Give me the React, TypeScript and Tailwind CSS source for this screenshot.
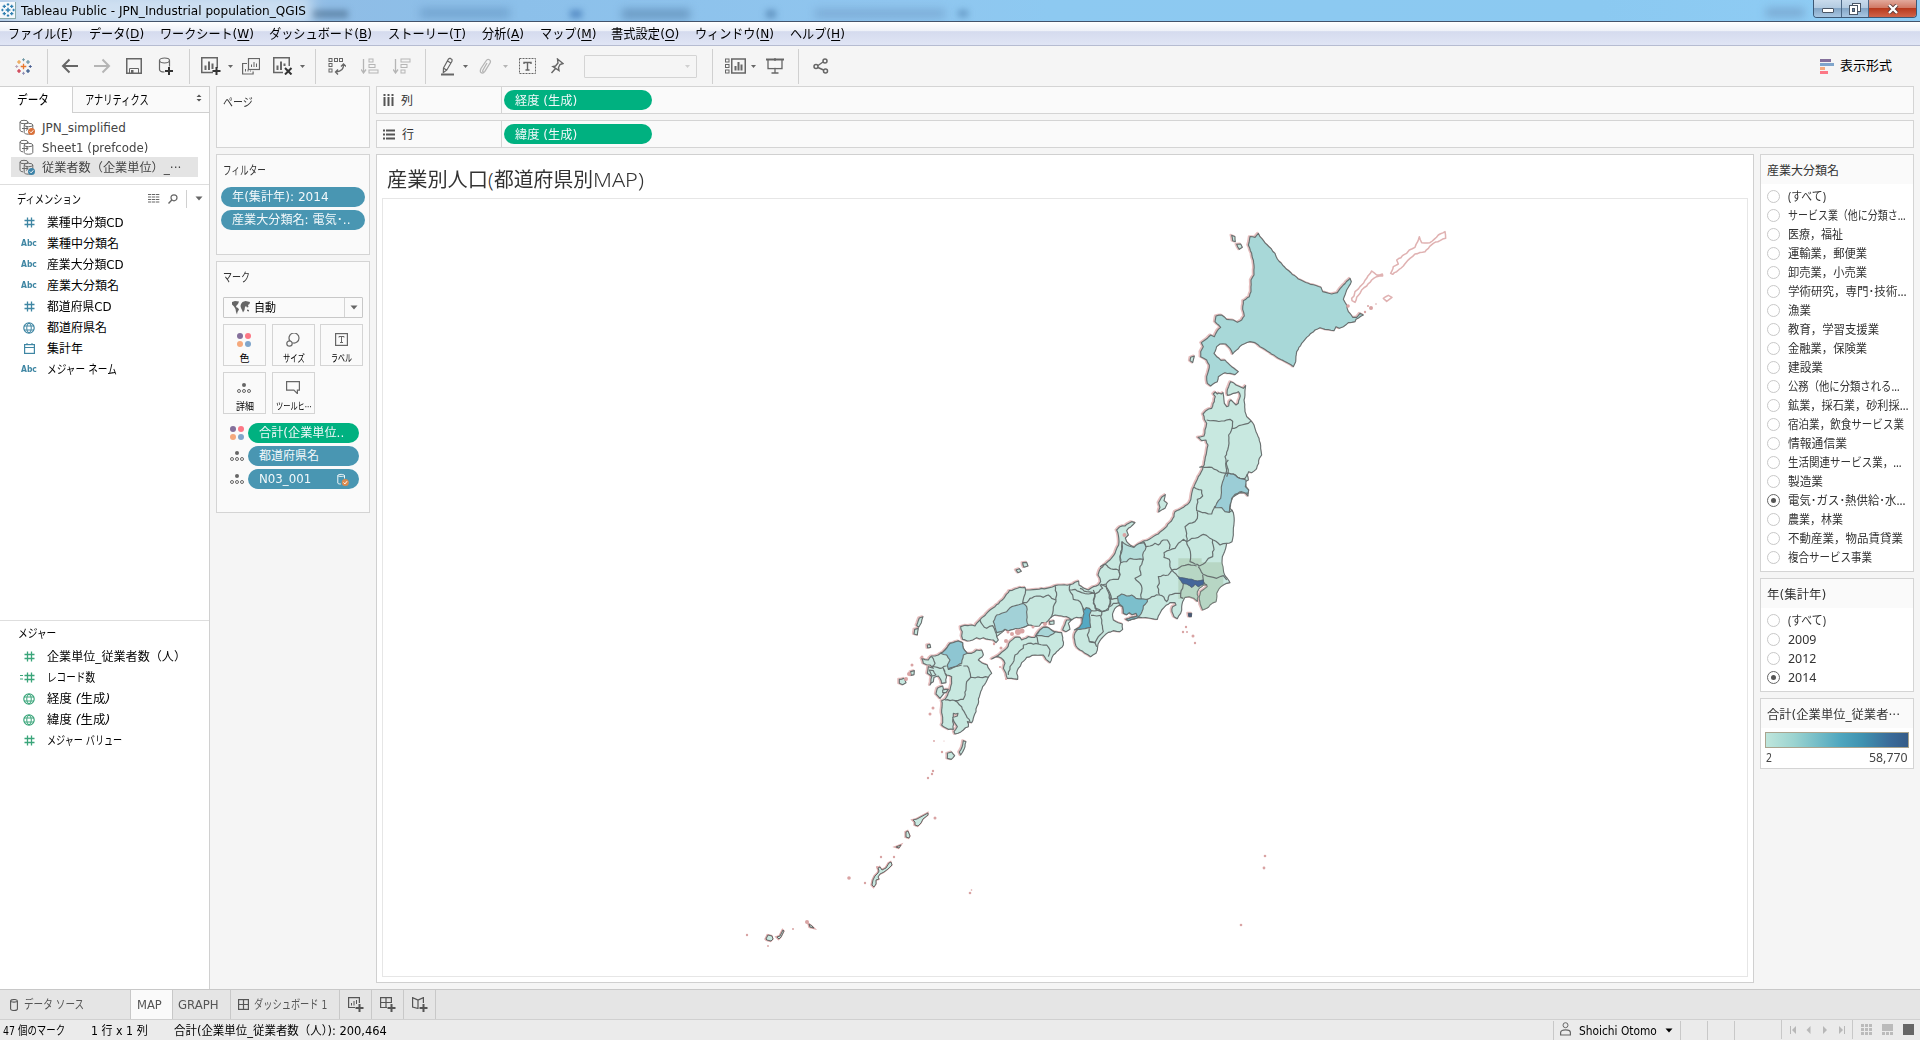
import React, { useLayoutEffect, useRef, useState } from "react";

/* ---------- text helper: condenses a run of text to a given advance width ---------- */
function T({ w, className = "", children }: { w: number; className?: string; children: React.ReactNode }) {
  const ref = useRef<HTMLSpanElement>(null);
  const [scale, setScale] = useState(1);
  useLayoutEffect(() => {
    if (ref.current) setScale(w / ref.current.offsetWidth);
  }, [w]);
  return (
    <span className={`inline-block shrink-0 whitespace-nowrap ${className}`} style={{ width: w }}>
      <span ref={ref} className="inline-block origin-left" style={{ transform: `scaleX(${scale})` }}>
        {children}
      </span>
    </span>
  );
}

const Caret = ({ className = "" }: { className?: string }) => (
  <svg width="8" height="5" viewBox="0 0 8 5" className={`shrink-0 ${className}`}>
    <path d="M0.5 0.5h7L4 4.5z" fill="currentColor" />
  </svg>
);
const SmallCaret = ({ className = "" }: { className?: string }) => (
  <svg width="5" height="3" viewBox="0 0 5 3" className={`shrink-0 ${className}`}>
    <path d="M0 0h5L2.500 3z" fill="currentColor" />
  </svg>
);

function Svg({ w = 20, h = 20, className = "", children }: any) {
  return (
    <svg width={w} height={h} viewBox={`0 0 ${w} ${h}`} fill="none" stroke="currentColor" className={`block shrink-0 ${className}`}>
      {children}
    </svg>
  );
}

/* ---------- Tableau logo ---------- */
function Logo({ mono = false, size = 17 }: { mono?: boolean; size?: number }) {
  const c = (x: string) => (mono ? "#2f7fb0" : x);
  const k = mono ? 1.4 : 1;
  const cross = (x: number, y: number, r: number, col: string, sw = 1) => (
    <path d={`M${x - r} ${y}h${2 * r}M${x} ${y - r}v${2 * r}`} stroke={c(col)} strokeWidth={sw * k} />
  );
  return (
    <svg width={size} height={size} viewBox="0 0 17 17" fill="none" className="block shrink-0">
      {cross(8.5, 8.5, 2.8, "#e8762c", 1.3)}
      {cross(4, 4, 2, "#eb9a3c", 1.1)}
      {cross(13, 4, 2, "#5b879b", 1.1)}
      {cross(4, 13, 2, "#c72035", 1.1)}
      {cross(13, 13, 2, "#1f457e", 1.1)}
      {cross(8.5, 1.7, 1.5, "#7099a6")}
      {cross(8.5, 15.3, 1.5, "#8c8fb5")}
      {cross(1.7, 8.5, 1.5, "#b8a0b5")}
      {cross(15.3, 8.5, 1.5, "#4a5f93")}
    </svg>
  );
}

/* ---------- title + menu ---------- */
function TitleBar() {
  return (
    <div className="relative flex h-[22px] items-center justify-between overflow-hidden border-b border-[#43536b] bg-[linear-gradient(90deg,#b4cde8_0px,#a9c9e8_280px,#8fbde6_330px,#8cc0ea_520px,#90c6ef_900px,#8dc9f1_1050px,#8bc9f1_1600px,#90cdf5_1920px)]">
      <div className="absolute top-[10px] left-[312px] h-[8px] w-[36px] bg-[#4f7294]/70 blur-[3px]" />
      <div className="absolute top-[8px] left-[420px] h-[10px] w-[90px] bg-[#5f8fbd]/55 blur-[4px]" />
      <div className="absolute top-[10px] left-[570px] h-[8px] w-[12px] bg-[#3f76b5]/70 blur-[3px]" />
      <div className="absolute top-[9px] left-[622px] h-[10px] w-[68px] bg-[#547fa8]/60 blur-[4px]" />
      <div className="absolute top-[10px] left-[766px] h-[8px] w-[10px] bg-[#4d7fae]/70 blur-[3px]" />
      <div className="absolute top-[9px] left-[815px] h-[9px] w-[130px] bg-[#6a93c0]/50 blur-[4px]" />
      <div className="absolute top-[10px] left-[958px] h-[7px] w-[10px] bg-[#4d7fae]/60 blur-[3px]" />
      <div className="absolute top-[8px] left-[1766px] h-[9px] w-[38px] bg-[#6d93bd]/60 blur-[4px]" />
      <div className="absolute -top-1 left-3 h-[28px] w-[300px] bg-white/40 blur-[6px]" />
      <div className="relative flex items-center">
        <div className="flex h-[17px] w-[16px] items-center justify-center border-r border-b border-[#8aa] bg-[#f4f8fb]">
          <Logo mono size={14} />
        </div>
        <T w={285} className="ml-[5px] text-[12px] leading-[20px] text-black">
          Tableau Public - JPN_Industrial population_QGIS
        </T>
      </div>
      <div className="relative mr-[3px] flex h-[18px] self-start overflow-hidden rounded-b-[4px] border border-t-0 border-[#3c5875]">
        <div className="flex w-[28px] items-center justify-center border-r border-[#4c6886] bg-[linear-gradient(#c9dbec_0%,#b3cbe1_45%,#84a6c6_50%,#a8c6e2_100%)]">
          <div className="mt-[3px] h-[5px] w-[12px] rounded-[1px] border border-[#4a5666] bg-white" />
        </div>
        <div className="flex w-[27px] items-center justify-center border-r border-[#4c6886] bg-[linear-gradient(#c9dbec_0%,#b3cbe1_45%,#84a6c6_50%,#a8c6e2_100%)]">
          <Svg w={12} h={12} className="text-[#4a5666]">
            <rect x="3.500" y="0.500" width="8" height="8" fill="#fff" />
            <rect x="0.500" y="2.500" width="8" height="9" fill="#fff" />
            <rect x="3.500" y="5.500" width="2" height="3" fill="#6b89a8" />
          </Svg>
        </div>
        <div className="flex w-[47px] items-center justify-center bg-[linear-gradient(#e2a99c_0%,#d17a66_45%,#b83a1e_50%,#d0644a_100%)]">
          <Svg w={12} h={10}>
            <path d="M2 1l8 8M10 1l-8 8" stroke="#5a3a3a" strokeWidth="4" />
            <path d="M2 1l8 8M10 1l-8 8" stroke="#fff" strokeWidth="2.400" />
          </Svg>
        </div>
      </div>
    </div>
  );
}

const menus: [string, string, number, number][] = [
  ["ファイル", "F", 65, 16],
  ["データ", "D", 55, 16],
  ["ワークシート", "W", 94, 15],
  ["ダッシュボード", "B", 103, 16],
  ["ストーリー", "T", 78, 15.5],
  ["分析", "A", 42, 16.5],
  ["マップ", "M", 56, 15],
  ["書式設定", "O", 68, 16],
  ["ウィンドウ", "N", 79, 16],
  ["ヘルプ", "H", 55, 0],
];
function MenuBar() {
  return (
    <div className="flex h-[24px] items-center border-b border-[#b6bcd1] bg-[linear-gradient(#ffffff_0%,#eef1f8_38%,#d5dbee_42%,#e0e5f5_100%)] pl-2 text-[13px] leading-[20px] text-black">
      {menus.map(([label, key, w, gap]) => (
        <span key={key} className="flex" style={{ marginRight: gap }}>
          <T w={w}>
            {label}(<span className="underline underline-offset-2">{key}</span>)
          </T>
        </span>
      ))}
    </div>
  );
}

/* ---------- toolbar ---------- */
const Sep = ({ className = "" }: { className?: string }) => <div className={`h-[35px] w-px shrink-0 bg-[#d0d0d0] ${className}`} />;
const Cell = ({ className = "", children }: any) => (
  <div className={`flex shrink-0 items-center justify-center ${className}`}>{children}</div>
);
const Plus = ({ x, y }: { x: number; y: number }) => <path d={`M${x - 4} ${y}h8M${x} ${y - 4}v8`} stroke="#333" strokeWidth="2" />;

function Toolbar() {
  return (
    <div className="flex h-[40px] items-center bg-[#f5f5f5] text-[#666]">
      <Cell className="w-[47px]"><Logo /></Cell>
      <Sep />
      <Cell className="ml-[6px] w-8">
        <Svg w={18} h={16}><path d="M17 8H2M8.500 1.500L2 8l6.500 6.500" strokeWidth="2" /></Svg>
      </Cell>
      <Cell className="w-8 text-[#b5b5b5]">
        <Svg w={18} h={16}><path d="M1 8h15M9.500 1.500L16 8l-6.500 6.500" strokeWidth="2" /></Svg>
      </Cell>
      <Cell className="w-8">
        <Svg w={16} h={16}><rect x=".750" y=".750" width="14.500" height="14.500" strokeWidth="1.500" /><path d="M3.500 15v-4.500h9V15" /><rect x="5" y="12" width="2.500" height="3" fill="currentColor" stroke="none" /></Svg>
      </Cell>
      <Cell className="w-8">
        <Svg w={16} h={19}>
          <ellipse cx="6.500" cy="3.500" rx="5" ry="2.500" strokeWidth="1.200" /><path d="M1.500 3.500v9c0 1.500 2 2.500 5 2.500M11.500 3.500v6" strokeWidth="1.200" />
          <Plus x={11} y={14} />
        </Svg>
      </Cell>
      <Sep className="ml-[7px]" />
      <Cell className="ml-[5px] w-8">
        <Svg w={20} h={18}><path d="M12 15.500H.750V.750h15.500V11" strokeWidth="1.500" /><path d="M4.500 13V8.500M8 13V4.500M11.500 12V6.500" strokeWidth="2" /><Plus x={15.5} y={14} /></Svg>
      </Cell>
      <Cell className="w-[7px]"><SmallCaret /></Cell>
      <Cell className="ml-px w-8">
        <Svg w={18} h={17}><rect x="6.500" y=".500" width="11" height="11" strokeWidth="1.200" /><path d="M5 5.500H.600v10.500h10.500V13.500" strokeWidth="1.200" /><path d="M9.500 9V6.500M12 9V4M14.500 9V5.500M3.500 13.500V11M6 13.500v-2M8.500 13.500v-1" /></Svg>
      </Cell>
      <Cell className="w-8">
        <Svg w={20} h={18}><path d="M10 15.500H.750V.750h15.500V9" strokeWidth="1.500" /><path d="M4.500 13V8.500M8 13V4.500M11.500 9V6.500" strokeWidth="2" /><path d="M12 11l6.500 6.500M18.500 11L12 17.500" stroke="#333" strokeWidth="2" /></Svg>
      </Cell>
      <Cell className="w-[7px]"><SmallCaret /></Cell>
      <Sep className="ml-[9px]" />
      <Cell className="ml-[5px] w-8">
        <Svg w={18} h={18}><rect x="1" y="1.500" width="3" height="3" /><rect x="6.500" y="1.500" width="3" height="3" /><rect x="11.500" y="1.500" width="3" height="3" /><rect x="1" y="6.500" width="3" height="3" /><rect x="1" y="12" width="3" height="3" /><path d="M15.500 7c.500 4.500-2 7.500-7.500 8M13 9.500L15.500 7 18 9.500M10 12.500L7.500 15l2.500 2.500" strokeWidth="1.300" /></Svg>
      </Cell>
      <Cell className="ml-px w-8 text-[#b5b5b5]">
        <Svg w={18} h={16}><path d="M2.500 1v13M0 11.500L2.500 15 5 11.500" strokeWidth="1.300" /><rect x="8" y="1" width="4" height="3" /><rect x="8" y="6.500" width="6" height="3" /><rect x="8" y="12" width="9" height="3" /></Svg>
      </Cell>
      <Cell className="w-8 text-[#b5b5b5]">
        <Svg w={18} h={16}><path d="M2.500 1v13M0 11.500L2.500 15 5 11.500" strokeWidth="1.300" /><rect x="8" y="1" width="9" height="3" /><rect x="8" y="6.500" width="6" height="3" /><rect x="8" y="12" width="4" height="3" /></Svg>
      </Cell>
      <Sep className="ml-[7px]" />
      <Cell className="ml-[9px] w-[25px]">
        <Svg w={13} h={19}><path d="M2.500 11L7.500 2l1.500-.800L11 2.500v1.700L5.700 13.200 2.300 15.500zM2.500 11l3.200 2.200M6.500 4l3 1.800" strokeWidth="1.200" /><path d="M0 17.500h13" strokeWidth="2" /></Svg>
      </Cell>
      <Cell className="ml-px w-2"><SmallCaret /></Cell>
      <Cell className="ml-[3px] w-[26px] text-[#b5b5b5]">
        <Svg w={14} h={16}><path d="M9 5L5 12c-1 2 1 3 2 1.200L12 5c1.500-3-2-5-4-2L3 10.500c-2 4 1 5.500 3 4" strokeWidth="1.300" /></Svg>
      </Cell>
      <Cell className="ml-[3px] w-2 text-[#b5b5b5]"><SmallCaret /></Cell>
      <Cell className="ml-[5px] w-[26px]">
        <Svg w={17} h={16}><rect x=".500" y=".500" width="16" height="15" strokeDasharray="2 1" /><path d="M5 6V4.500h7V6M8.500 4.500v7M6.500 12h4" strokeWidth="1.400" /></Svg>
      </Cell>
      <Cell className="ml-[4px] w-[26px]">
        <Svg w={14} h={16}><path d="M7.500 1l5.500 4.500-3 1-1.500 3 .500 3L3 8.500l2.500-.500L8 5zM5.500 10.500L1.500 15" strokeWidth="1.400" /></Svg>
      </Cell>
      <div className="ml-[14px] flex h-[23px] w-[113px] shrink-0 items-center justify-end rounded-[1px] border border-[#d4d4d4] pr-[6px] text-[#d0d0d0]"><SmallCaret /></div>
      <Sep className="ml-[15px]" />
      <Cell className="ml-[8px] w-7">
        <Svg w={21} h={16}><rect x=".500" y="1" width="3.500" height="3" /><rect x=".500" y="6.500" width="3.500" height="3" /><rect x=".500" y="12" width="3.500" height="3" /><rect x="6.750" y="1" width="13.500" height="14" strokeWidth="1.500" /><path d="M10.500 12.500V8M13.500 12.500V4M16.500 12.500V6.500" strokeWidth="2" /></Svg>
      </Cell>
      <Cell className="w-2"><SmallCaret /></Cell>
      <Cell className="ml-[5px] w-[25px]">
        <Svg w={18} h={16}><path d="M0 1.500h18" strokeWidth="2" /><path d="M2 2v8.500h14V2M9 0v15M5.500 15h7" strokeWidth="1.300" /><rect x="3" y="3" width="12" height="6.800" fill="#f5f5f5" stroke="none" /></Svg>
      </Cell>
      <Sep className="ml-[11px]" />
      <Cell className="ml-[9px] w-[26px]">
        <Svg w={16} h={16}><circle cx="3" cy="8.500" r="2" strokeWidth="1.500" /><circle cx="12" cy="3" r="2" strokeWidth="1.500" /><circle cx="12.500" cy="13" r="2" strokeWidth="1.500" /><path d="M5 7.500L10 4M5 9.500l5.500 2.500" strokeWidth="1.400" /></Svg>
      </Cell>
      <div className="mr-[28px] ml-auto flex items-center gap-[6px] text-[13px] text-black">
        <div className="flex w-[14px] flex-col gap-px">
          <div className="h-[3px] w-[11px] bg-[#84709b]" />
          <div className="h-[3px] w-[14px] bg-[#7fa5cb]" />
          <div className="h-[3px] w-[5px] bg-[#f5a97d]" />
          <div className="h-[3px] w-[8px] bg-[#fc7785]" />
        </div>
        <T w={52}>表示形式</T>
      </div>
    </div>
  );
}

/* ---------- field glyphs ---------- */
const Hash = () => (
  <Svg w={11} h={11}><path d="M.500 3.500h10M.500 7.500h10M3.500 .500v10M7.500 .500v10" strokeWidth="1.300" /></Svg>
);
const Globe = () => (
  <Svg w={12} h={12}><circle cx="6" cy="6" r="5.200" strokeWidth="1.200" /><path d="M1 4h10M1 8h10M6 1C3 3 3 9 6 11M6 1c3 2 3 8 0 10" /></Svg>
);
const Calendar = () => (
  <Svg w={11} h={11}><rect x=".600" y="1.600" width="9.800" height="8.800" strokeWidth="1.200" /><path d="M1 4.500h9M3 0v2M8 0v2" /></Svg>
);
const Abc = () => <T w={16} className="text-[9.5px] font-bold">Abc</T>;
const kinds: Record<string, React.ReactNode> = {
  hash: <Hash />,
  abc: <Abc />,
  globe: <Globe />,
  cal: <Calendar />,
  eqhash: (
    <span className="-ml-[4px] flex items-center"><Svg w={3} h={5}><path d="M0 .500h3M0 4h3" /></Svg><span className="ml-px"><Hash /></span></span>
  ),
};
function Field({ kind, label, w }: { kind: string; label: React.ReactNode; w: number }) {
  return (
    <div className="flex h-[21px] items-center">
      <div className="flex w-[58px] shrink-0 items-center justify-center text-inherit">{kinds[kind]}</div>
      <T w={w} className="-ml-[11px] text-[12px] leading-[20px] text-black">{label}</T>
    </div>
  );
}

function SourceIcon({ badge }: { badge?: string }) {
  return (
    <Svg w={17} h={17} className="text-[#6a6a6a]">
      <ellipse cx="5" cy="3" rx="4" ry="1.700" /><path d="M1 3v8c0 1 1.500 1.800 3 1.800M9 3v1" />
      <ellipse cx="9.500" cy="6" rx="4.300" ry="1.700" /><path d="M5.200 6v7.500c0 1 2 1.700 4.300 1.700s4.300-.700 4.300-1.700V6M3 9.500h6M7 7.500l2.200 2L7 11.500" />
      {badge && <><circle cx="12.500" cy="12.500" r="3.500" fill={badge} stroke="none" /><path d="M10.800 12.500l1.300 1.300 2.200-2.500" stroke="#fff" /></>}
    </Svg>
  );
}

const sources: [string, number, string | undefined, boolean][] = [
  ["JPN_simplified", 84, "#d9723b", false],
  ["Sheet1 (prefcode)", 106, undefined, false],
  ["従業者数（企業単位）_···", 139, "#3d83a8", true],
];
const dims: [string, string, number][] = [
  ["hash", "業種中分類CD", 77],
  ["abc", "業種中分類名", 72],
  ["abc", "産業大分類CD", 77],
  ["abc", "産業大分類名", 72],
  ["hash", "都道府県CD", 65],
  ["globe", "都道府県名", 60],
  ["cal", "集計年", 36],
  ["abc", "メジャー ネーム", 70],
];

function DataPane() {
  return (
    <div className="flex w-[210px] shrink-0 flex-col border-t border-r border-[#d0d0d0] bg-white">
      <div className="flex h-[26px] text-[13px] leading-[26px] text-black">
        <div className="w-[72px] pl-[17px]"><T w={32}>データ</T></div>
        <div className="flex flex-1 items-center border-b border-l border-[#d0d0d0] bg-[#fafafa] pl-[12px]">
          <T w={64}>アナリティクス</T>
          <Svg w={6} h={8} className="mr-[7px] mb-[3px] ml-auto"><path d="M.500 3L3 .500 5.500 3zM.500 5L3 7.500 5.500 5z" fill="#555" stroke="none" /></Svg>
        </div>
      </div>
      <div className="flex h-[72px] flex-col border-b border-[#dedede] pt-[4px]">
        {sources.map(([label, w, badge, sel]) => (
          <div key={label} className={`ml-[11px] flex h-5 w-[187px] items-center pl-2 ${sel ? "bg-[#e4e4e4]" : ""}`}>
            <SourceIcon badge={badge} />
            <T w={w} className="mt-[2px] ml-[6px] text-[12px] leading-[20px] text-[#444]">{label}</T>
          </div>
        ))}
      </div>
      <div className="flex h-[27px] items-center pt-[2px] pl-[17px] text-[12px] text-black">
        <T w={64}>ディメンション</T>
        <div className="mb-[2px] ml-auto flex items-center text-[#666]">
          <Svg w={12} h={9}><path d="M0 .500h12M0 3h12M0 5.500h12M0 8h12" strokeDasharray="3.300 0.700" strokeWidth="1.200" /></Svg>
          <Svg w={10} h={10} className="ml-2"><circle cx="6" cy="3.800" r="3" strokeWidth="1.200" /><path d="M3.800 6L.500 9.500" strokeWidth="1.400" /></Svg>
          <div className="ml-[8px] h-[18px] w-px bg-[#d0d0d0]" />
          <Caret className="mr-[6px] ml-[8px]" />
        </div>
      </div>
      <div className="flex flex-col text-[#3f86a3]">
        {dims.map(([k, l, w]) => <Field key={l} kind={k} label={l} w={w} />)}
      </div>
      <div className="mt-[240px] border-t border-[#dedede] pt-[3px] pl-[18px] text-[12px] leading-[20px] text-black">
        <T w={38}>メジャー</T>
      </div>
      <div className="mt-[2px] flex flex-col text-[#3aa57a]">
        <Field kind="hash" label="企業単位_従業者数（人）" w={139} />
        <Field kind="eqhash" label="レコード数" w={48} />
        <Field kind="globe" label={<>経度 <i>(</i>生成<i>)</i></>} w={63} />
        <Field kind="globe" label={<>緯度 <i>(</i>生成<i>)</i></>} w={63} />
        <Field kind="hash" label="メジャー バリュー" w={75} />
      </div>
    </div>
  );
}

/* ---------- cards ---------- */
const FourDots = () => (
  <div className="grid w-[14px] shrink-0 grid-cols-2 gap-[2px]">
    <div className="size-[6px] rounded-full bg-[#84709b]" /><div className="size-[6px] rounded-full bg-[#fc7785]" />
    <div className="size-[6px] rounded-full bg-[#f5a97d]" /><div className="size-[6px] rounded-full bg-[#7fa5cb]" />
  </div>
);
const Detail = () => (
  <Svg w={14} h={10} className="text-[#666]">
    <circle cx="7" cy="2" r="2" fill="currentColor" stroke="none" />
    <circle cx="2" cy="8" r="1.500" /><circle cx="7" cy="8" r="1.500" /><circle cx="12" cy="8" r="1.500" />
  </Svg>
);
function Pill({ className = "", children }: any) {
  return <div className={`flex h-5 items-center rounded-full text-[12px] leading-[20px] text-[#f2f8fa] ${className}`}>{children}</div>;
}
function MarkButton({ label, w, children }: any) {
  return (
    <div className="flex h-[42px] w-[43px] flex-col items-center justify-between border border-[#d4d4d4] pt-[7px] text-[#666]">
      <div className="flex h-[15px] items-center pr-px">{children}</div>
      <T w={w} className="text-[10px] leading-[13px] text-black">{label}</T>
    </div>
  );
}

function CardColumn() {
  const card = "shrink-0 border border-[#d4d4d4] bg-[#fafafa]";
  return (
    <div className="ml-[6px] flex w-[154px] shrink-0 flex-col gap-[6px] text-[12px] text-[#333]">
      <div className={`${card} h-[62px] pt-[6px] pl-[6px] leading-[20px]`}><T w={30}>ページ</T></div>
      <div className={`${card} h-[101px] px-[4px] pt-[6px]`}>
        <T w={43} className="ml-[2px] leading-[20px]">フィルター</T>
        <Pill className="mt-[6px] bg-[#4996b2] pl-[11px]"><T w={97}>年(集計年): 2014</T></Pill>
        <Pill className="mt-[3px] bg-[#4996b2] pl-[11px]"><T w={119}>産業大分類名: 電気･..</T></Pill>
      </div>
      <div className={`${card} h-[252px] pt-[6px] pl-[6px]`}>
        <T w={27} className="leading-[20px]">マーク</T>
        <div className="mt-[9px] flex h-[21px] w-[140px] items-center rounded-[1px] border border-[#c8c8c8] pl-[8px]">
          <svg width="18" height="14" viewBox="0 0 18 14" fill="#666" className="block">
            <path d="M0 1l3-1 4 .500L6 3 4.500 4.500 4 6l2 1 1 1.500L5.500 11 5 13.500 4 11 3.500 8 2 5.500 0 3.500zM9 3l1.500-2 3-1L18 1l-.500 2-1.500 1 .500 2-1.500.500-1-1.500L13 6l-.500 3-1.500 2.500L10 9 9 7 8.500 5zM15 8.500l2 .500v1.500l-2-.500z" />
          </svg>
          <T w={22} className="ml-[4px] leading-[20px] text-black">自動</T>
          <div className="ml-auto flex h-full w-[18px] items-center justify-center border-l border-[#d4d4d4] text-[#666]"><Caret /></div>
        </div>
        <div className="mt-[6px] grid w-[140px] grid-cols-[43px_42px_43px] gap-x-[6px] gap-y-[6px]">
          <MarkButton label="色" w={10}><FourDots /></MarkButton>
          <MarkButton label="サイズ" w={22}>
            <Svg w={14} h={14}><path d="M4 8A5 5 0 1 1 6.500 9.800" strokeWidth="1.200" /><circle cx="3.500" cy="10.500" r="2.700" strokeWidth="1.200" /></Svg>
          </MarkButton>
          <MarkButton label="ラベル" w={21}>
            <Svg w={13} h={13}><rect x=".600" y=".600" width="11.800" height="11.800" strokeWidth="1.200" /><path d="M4 4.500v-1h5v1M6.500 3.500v5.500M5 9.500h3" /></Svg>
          </MarkButton>
          <MarkButton label="詳細" w={18}><Detail /></MarkButton>
          <MarkButton label="ツールヒ···" w={36}>
            <Svg w={14} h={13}><path d="M.600.600h12.800v8.500h-2v3.500l-3.500-3.500H.600z" strokeWidth="1.200" /></Svg>
          </MarkButton>
        </div>
        <div className="mt-[9px] flex flex-col gap-[3px] pl-[7px]">
          <div className="flex items-center gap-[4px]"><FourDots /><Pill className="w-[111px] bg-[#00b180] pl-[11px]"><T w={85}>合計(企業単位..</T></Pill></div>
          <div className="flex items-center gap-[4px]"><Detail /><Pill className="w-[111px] bg-[#4996b2] pl-[11px]"><T w={60}>都道府県名</T></Pill></div>
          <div className="flex items-center gap-[4px]"><Detail /><Pill className="w-[111px] justify-between bg-[#4996b2] pr-[10px] pl-[11px]">
            <T w={52}>N03_001</T>
            <Svg w={12} h={13}><path d="M.800 2.500C.800 1 7.500 1 7.500 2.500v3M.800 2.500v7.500c0 .800 1.500 1 3 1M.800 2.500c0 1.200 6.700 1.200 6.700 0" /><circle cx="8.300" cy="9.500" r="3.500" fill="#d98a4f" stroke="none" /><path d="M6.500 9.500l1.400 1.400 2.200-2.700" stroke="#fff" /></Svg>
          </Pill></div>
        </div>
      </div>
    </div>
  );
}

function Shelf({ icon, label, pill }: any) {
  return (
    <div className="flex h-[28px] shrink-0 items-center border border-[#d4d4d4] bg-[#fafafa] text-[12px] leading-[20px] text-[#333]">
      <div className="flex h-full w-[125px] items-center border-r border-[#d4d4d4] pl-[6px]">
        {icon}
        <T w={12} className="mt-px ml-[7px]">{label}</T>
      </div>
      <Pill className="ml-[2px] w-[148px] bg-[#00b180] pl-[11px]"><T w={62} className="mt-[2px]">{pill}</T></Pill>
    </div>
  );
}

/* ---------- map ---------- */
type Pt = [number, number];
const at = (dx: number, dy: number, s: string): Pt[] =>
  s.trim().split(/\s+/).map((p) => {
    const [x, y] = p.split(",").map(Number);
    return [x + dx, y + dy] as Pt;
  });
/* three sheets of one survey grid: north, centre, west */
const N = (s: string) => at(900, 0, s);
const C = (s: string) => at(540, 750, s);
const W = (s: string) => at(0, 990, s);
/* small deterministic irregularity for coast and boundary lines */
function rough(pts: Pt[], amp: number, closed: boolean): string {
  const out: string[] = [];
  const n = pts.length;
  for (let i = 0; i < (closed ? n : n - 1); i++) {
    const [x1, y1] = pts[i];
    const [x2, y2] = pts[(i + 1) % n];
    out.push(`${x1} ${y1}`);
    const len = Math.hypot(x2 - x1, y2 - y1);
    const k = Math.floor(len / 7);
    for (let j = 1; j < k; j++) {
      const t = j / k;
      const x = x1 + (x2 - x1) * t;
      const y = y1 + (y2 - y1) * t;
      const r = Math.sin(x * 12.9898 + y * 78.233) * 43758.5453;
      const d = (r - Math.floor(r) - 0.5) * 2 * amp;
      out.push(`${(x - ((y2 - y1) / len) * d).toFixed(1)} ${(y + ((x2 - x1) / len) * d).toFixed(1)}`);
    }
  }
  if (!closed) out.push(pts[n - 1].join(" "));
  return "M" + out.join("L") + (closed ? "Z" : "");
}

const hokkaido = rough(N("235,70 240,80 262,105 285,130 292,147 320,178 355,207 385,220 423,232 428,245 455,252 472,248 490,225 510,205 514,215 500,240 490,268 500,285 505,305 518,322 530,322 540,310 550,315 528,328 525,335 505,338 490,350 478,355 468,350 462,362 435,358 420,353 405,360 380,382 365,400 350,425 347,455 340,470 325,460 295,445 270,428 240,410 225,398 210,395 185,405 158,432 150,415 137,402 120,402 110,410 102,430 110,440 123,451 135,450 155,470 175,485 165,494 135,488 115,500 112,515 92,528 82,520 80,500 86,480 88,465 80,450 62,440 62,425 70,410 64,398 75,390 92,375 103,380 112,362 122,352 105,335 108,318 125,315 140,328 160,330 172,337 185,330 193,318 188,298 190,272 208,260 213,245 213,210 222,195 222,165 215,130 205,105 210,80 225,82"), 1, true);

const honshuPts: Pt[] = [
  ...N("106,546 112,552 116,549 124,552 129,548 131,560 133,580 140,590 146,588 148,575 153,570 160,577 168,585 175,580 181,558 175,545 160,550 143,556 141,550 146,530 152,515 160,518 168,525 180,530 190,535 197,527 195,540 192,570 195,605 200,620 212,631 222,645 228,665 237,685 241,700 242,715 245,735 238,745 236,760 230,775"),
  ...C("588,28 575,38 566,35 562,45 565,60 555,65 558,80 566,90 564,108 555,98 540,98 528,105 518,112 512,125 510,145 520,158 522,190 520,225 516,245 500,250 497,265 487,290 486,310 490,330 497,350 510,368 500,370 490,375 478,385 470,400 468,425 450,435 440,445 428,450 424,440 420,425 418,410 422,395 432,388 442,380 440,374 430,375 418,385 412,395 414,410 412,424 402,415 388,410 375,412 368,425 365,440 362,460 352,476 342,470 336,455 338,440 348,435 345,428 330,428 318,436 305,450 300,460 292,478 265,474 240,472 225,476 205,482 198,478 215,472 232,468 228,460 216,464 208,458 200,464 190,460 188,440 178,436 170,440 160,455 158,470 160,480 175,488 187,492 188,508 180,515 160,512 145,517 130,530 118,545 113,560"),
  ...W("648,340 632,350 615,340 600,330 588,318 584,300 583,285 590,272 600,262 608,248 605,232 590,232 575,240 560,230 545,228 525,225 510,235 498,248 485,248 478,258 460,258 445,255 430,262 415,262 400,268 385,272 375,268 365,278 350,290 355,300 348,308 340,300 325,298 310,293 300,297 290,293 278,300 262,303 248,298 245,288 247,275 242,260 255,256 275,255 285,258 300,240 310,230 325,215 345,200 360,185 375,170 385,158 388,152 405,147 420,142 435,142 437,150 450,150 470,148 500,145 525,137 545,135 570,134 585,127 596,123 597,135 612,145 625,150 640,140 655,135 662,125 660,115 654,105 658,92 672,75 690,60 705,40 716,15"),
  ...C("177,245 175,225 170,210 180,200 195,198 215,185 225,188 218,195 205,205 200,212 205,225 196,234 200,245 210,255 222,262 232,255 245,247 268,238 295,222 320,200 342,170 345,155 365,145 388,128 394,108 402,80 415,50"),
  ...N("68,778 75,750 80,725 84,705 78,690 65,692 54,682 72,678 75,660 80,640 73,628 69,612 78,602 95,595 103,575 106,560 100,552"),
];
const honshu = rough(honshuPts, 1.6, true);
const shikoku = rough(W("335,357 360,342 380,325 390,305 405,292 420,292 425,300 445,290 465,292 470,282 480,270 490,262 505,263 525,275 545,278 548,300 550,315 530,335 520,345 510,368 498,358 490,345 465,345 440,352 425,368 415,385 410,400 413,418 395,415 382,415 378,400 370,385 375,370 365,355 355,350"), 2, true);
const kyushu = rough(W("182,340 195,330 210,310 235,303 248,308 250,325 262,340 275,340 290,330 305,330 310,345 295,360 305,368 322,375 328,388 335,400 325,412 308,440 298,470 288,515 275,548 262,545 265,560 250,570 225,582 222,575 232,560 222,545 218,532 232,528 234,520 220,520 218,545 220,568 205,568 185,555 188,540 185,510 185,482 195,478 205,458 212,440 215,430 215,410 200,405 190,385 195,400 200,410 198,428 185,430 175,408 162,412 160,425 150,435 155,410 142,400 145,380 160,385 150,375 130,370 125,355 145,360 155,348 175,345"), 2, true);

const tinted: [string, string][] = [
  ["#9bcdd6", rough(C("498,40 520,42 540,55 558,60 556,80 566,90 564,100 545,95 525,103 515,115 510,135 508,157 495,155 485,143 465,143 470,130 482,115 484,90 488,65"), 1.5, true)],
  ["#b5dedb", rough(C("186,245 200,255 222,262 240,250 252,248 258,262 248,285 250,298 230,298 210,295 200,305 182,308 180,290 186,268"), 1.5, true)],
  ["#7cbfcc", rough(C("172,410 185,402 200,408 215,405 228,415 262,418 262,425 250,438 246,455 238,468 225,476 205,482 198,478 215,472 232,468 228,460 216,464 208,458 200,464 190,460 188,440 178,432"), 1.5, true)],
  ["#44679a", rough(C("356,353 375,355 395,358 412,363 430,360 430,373 415,380 405,372 395,382 380,372 368,370"), 1.5, true)],
  ["#55a9c3", rough(W("608,202 614,210 618,203 628,205 634,212 628,225 632,262 615,266 583,270 598,262 606,250 608,235 612,220"), 1, true)],
  ["#a2d1d7", rough(W("430,190 440,200 440,240 445,255 430,262 400,268 385,272 375,268 362,275 350,278 340,245 350,225 380,215 395,200"), 1.5, true)],
  ["#8ec6d2", rough(W("182,340 195,330 210,310 235,303 248,308 250,325 262,340 250,345 245,370 225,380 205,388 202,375 210,360 200,345"), 1.5, true)],
  ["#a8d6d8", rough(W("468,286 480,270 490,262 505,263 525,277 505,290 485,287"), 1, true)],
];

const borders = [
  N("80,630 100,632 125,633 150,628 158,634 156,655 170,652 185,645 205,640 213,633"),
  N("156,655 146,675 147,700 143,720 135,740 140,765 145,780 144,790 140,800"),
  C("418,22 455,22 470,30 485,38 498,40 500,30 497,10 505,0"),
  C("498,40 520,42 540,55 555,55 562,42"),
  C("402,82 425,90 428,108 412,118 410,152 435,158 455,162 462,145 465,138"),
  C("412,155 412,175 405,185 388,190 375,200 380,220 380,245 395,235 415,232 430,223 450,235 460,240 480,255 500,250"),
  C("508,157 518,150"),
  C("458,240 461,262 458,290 445,295 430,312 418,318 405,312 390,305 392,285 388,265 380,245"),
  C("415,320 428,342 450,350 470,355 490,347 500,360"),
  C("428,345 430,365 440,375"),
  C("380,245 370,238 355,250 345,265 330,270 312,278 312,292 328,298 330,320 335,330 350,328 365,318 385,313 410,318"),
  C("252,246 258,260 270,258 285,250 295,255 310,240 322,240 330,255 328,268"),
  C("186,245 186,268 180,290 182,308 178,320 178,332"),
  C("120,320 135,312 145,322 160,328 175,330 180,345 175,358 150,360 138,372 120,375 128,385 105,402 80,395 60,385"),
  C("250,298 240,320 243,345 225,355 240,370 246,385 242,405 244,417"),
  C("138,372 145,390 150,400 155,418 172,415"),
  C("105,402 100,420 108,445 125,455 145,450 150,430 150,402"),
  C("178,428 160,430 148,440"),
  C("108,450 125,455 122,470 125,490 130,515 115,530 105,548 88,545"),
  C("93,466 110,468 122,466"),
  C("88,505 82,525 88,545 105,548 110,560"),
  C("335,332 325,345 310,345 295,350 298,370 292,380 298,405 312,412 320,425 328,405 345,400 362,400 368,385 370,372"),
  C("335,330 348,342 358,352"),
  C("296,405 275,410 262,418"),
  C("362,400 362,412 370,415"),
  W("570,134 568,150 578,165 580,178 600,185 608,202"),
  W("640,150 645,170 640,190 650,210 668,215 685,205 692,190 688,165 678,140 662,132"),
  W("634,212 650,212"),
  W("568,150 585,148 605,158 625,162 645,158"),
  W("525,137 530,165 528,185 520,200 518,220 512,234"),
  W("437,150 432,170 428,188 440,188 450,175 470,168 490,172 505,165 515,175 528,180"),
  W("300,240 308,255 320,265 338,257 346,275 350,290"),
  W("468,286 475,312 500,315 510,330 505,350"),
  W("385,405 390,380 402,362 405,345 430,325 430,315 445,310 475,312"),
  W("250,378 262,378 268,392 272,412 260,425 258,450 250,478 225,482 195,480"),
  W("205,388 225,380 245,375"),
  W("272,412 300,412 325,412"),
  W("225,482 245,500 255,520 270,545"),
  W("155,350 165,370 155,380 180,385 200,378"),
  C("177,335 180,345"),
];
const isles = [
  N("155,76 165,80 166,95 158,92"), N("170,103 182,102 187,112 178,118"), N("32,442 43,438 38,458 30,452"),
  C("296,128 305,112 316,104 312,122 322,130 315,145 296,156 300,142"),
  C("385,460 395,460 394,470 387,470"),
  W("428,68 440,67 444,78 432,82"), W("408,90 418,86 424,94 414,98"),
  W("118,234 129,230 124,248 116,262 110,256"), W("104,268 115,265 112,285 102,282"),
  W("142,315 150,313 152,322 143,324"), W("58,418 72,415 78,428 68,434 58,430"), W("92,395 103,392 102,404 93,406"),
  W("250,602 258,605 252,628 242,645 238,636 246,622"), W("202,640 215,636 224,647 214,658 202,655"),
  W("172,445 188,438 192,460 180,475 168,462"), W("188,450 205,448 198,458 188,458"),
  W("548,270 560,240 575,238 565,250 570,268 558,275"), W("508,244 522,242 522,252 510,253"), W("148,390 160,392 168,405 156,408"),
];
const pinkLines = [
  N("515,265 522,258 525,245 545,225 560,205 575,183 590,195 607,192 608,198 590,200 575,210 560,228 545,240 530,262 525,277 516,272"),
  N("632,190 640,170 655,162 650,150 680,130 688,120 705,112 713,95 718,80 725,98 750,98 775,75 795,65 797,85 780,92 760,100 735,125 705,132 690,145 670,168 650,185 638,193"),
  N("610,265 625,256 636,262 620,274"),
];
/* remote islands in page pixels: x, y, radius */
const specks: [number, number, number][] = [
  [1368, 306, 1], [1365, 312, 1.2], [1371, 308, 2], [1376, 304, 0.8], [1348, 306, 1.8],
  [1187, 632, 1], [1183, 632, 1.2], [1193, 636, 1.5], [1195, 643, 1.2], [1186, 627, 1.2],
  [1124.5, 535, 2],
  [942, 752, 1.2], [933, 771, 1.2], [932, 774, 1.2], [928, 778, 1.2], [934, 741, 0.9], [944, 741, 0.5], [930, 714, 1.5], [933, 708, 1.5],
  [935, 818, 1.5], [881, 857, 1.2], [877, 867, 1], [894, 857, 1.2], [849, 878, 1.8], [865, 883, 1.2], [970, 893, 1.3], [971.5, 890, 0.8],
  [1265, 856, 1.3], [1264, 868, 1.4], [1241, 925, 1.3], [747, 935, 1.2], [793, 929, 1], [768, 946, 0.9], [807, 922, 2],
  [1006, 641, 2], [1012, 634, 2], [1018, 632, 3], [1022, 631, 2.5], [1045, 624, 2], [1033, 627, 1.5], [1001, 648, 1.5], [994, 644, 1.2], [1008, 632, 1.5],
  [906, 679, 2], [909, 674, 2], [912, 665, 1.5], [922, 657, 1.5], [1000, 667, 1], [1006, 679, 1],
];
/* southern chain outlines in page pixels */
const southern = [
  "M913 820l4-1 11-6v2l-5 4-2 4-3 3-3-1v-3z",
  "M906 832l2-1 2 5-1 2-3-1z", "M896 847l5-2-2 3z",
  "M891 862l1 3-4 4-4 3-4 2-2 3 1 2-3 1v4l-2 3-2-2 1-5 2-4 3-3 1-2-1-3 2-1 2 3 4-2 3-5z",
  "M766 939l2-4 4 1 1 3-2 2-4-1z", "M777 937l3-1 3-6 1 1-3 6-2 2z", "M809 924l3 2 2 2-4-1z",
];

function JapanMap() {
  const land = [hokkaido, honshu, shikoku, kyushu, ...isles.map((p) => rough(p, 1, true))];
  return (
    <svg viewBox="383 199 1364 777" width="1364" height="777" className="block">
      <defs><clipPath id="land"><path d={honshu} /></clipPath></defs>
      <g transform="translate(880 210) scale(0.333333)" strokeLinejoin="round">
        <g transform="translate(-3 -1)" fill="none" stroke="#dca8a8" strokeOpacity="0.75" strokeWidth="7">
          {land.map((d, i) => <path key={i} d={d} />)}
        </g>
        <g fill="#c8e8e0" stroke="#687070" strokeWidth="3.400">
          {land.map((d, i) => <path key={i} d={d} fill={i === 0 ? "#a8d8d8" : undefined} />)}
          {tinted.map(([c, d], i) => <path key={i} d={d} fill={c} />)}
        </g>
        <g clipPath="url(#land)" fill="#9ebb9c" fillOpacity="0.4">
          <path d="M895 1045h70v12h65v150h-105v-40h-30z" />
        </g>
        <g fill="none" stroke="#687070" strokeWidth="3.600">
          {borders.map((p, i) => <path key={i} d={rough(p, 2, false)} />)}
        </g>
        <path d={tinted[3][1]} fill="#44679a" stroke="#46597a" strokeWidth="2" />
        <g fill="none" stroke="#e0b2b2" strokeWidth="4.600">
          {pinkLines.map((p, i) => <path key={i} d={rough(p, 1.5, true)} />)}
        </g>
      </g>
      <g fill="#d9a3a3">
        {specks.map(([x, y, r], i) => <circle key={i} cx={x} cy={y} r={r} />)}
      </g>
      <g fill="#c8e8e0" stroke="#dba9a9" strokeWidth="2.200">{southern.map((d, i) => <path key={i} d={d} transform="translate(-.5 0)" />)}</g>
      <g fill="#c8e8e0" stroke="#666" strokeWidth="1">{southern.map((d, i) => <path key={i} d={d} />)}</g>
      <circle cx="1190" cy="615" r="2" fill="#4a5a75" />
    </svg>
  );
}

/* ---------- right side ---------- */
const industries: [string, number][] = [
  ["(すべて)", 38], ["サービス業（他に分類さ…", 118], ["医療，福祉", 55], ["運輸業，郵便業", 79], ["卸売業，小売業", 79],
  ["学術研究，専門･技術…", 119], ["漁業", 23], ["教育，学習支援業", 91], ["金融業，保険業", 79], ["建設業", 35],
  ["公務（他に分類される…", 112], ["鉱業，採石業，砂利採…", 121], ["宿泊業，飲食サービス業", 116], ["情報通信業", 59],
  ["生活関連サービス業，…", 114], ["製造業", 35], ["電気･ガス･熱供給･水…", 118], ["農業，林業", 55], ["不動産業，物品賃貸業", 115], ["複合サービス事業", 84],
];
const years: [string, number][] = [["(すべて)", 38], ["2009", 28], ["2012", 28], ["2014", 28]];

function RadioList({ items, selected }: { items: [string, number][]; selected: string }) {
  return (
    <div className="flex flex-col pl-[6px]">
      {items.map(([l, w]) => (
        <div key={l} className="flex h-[19px] items-center">
          <div className={`flex size-[13px] shrink-0 items-center justify-center rounded-full border ${l === selected ? "border-[#666]" : "border-[#c8c8c8]"}`}>
            {l === selected && <div className="size-[5px] rounded-full bg-[#555]" />}
          </div>
          <T w={w} className="ml-[8px] font-['Noto_Sans','Noto_Sans_CJK_JP',sans-serif] text-[12px] leading-[19px] text-[#333]">{l}</T>
        </div>
      ))}
    </div>
  );
}
function RightCard({ title, w, className = "", children }: any) {
  return (
    <div className={`shrink-0 border border-[#d4d4d4] bg-white ${className}`}>
      <div className="h-[29px] bg-[#fafafa] pt-[6px] pl-[6px] text-[12px] leading-[20px] text-[#333]"><T w={w}>{title}</T></div>
      {children}
    </div>
  );
}
function RightColumn() {
  return (
    <div className="flex w-[154px] shrink-0 flex-col gap-[6px]">
      <RightCard title="産業大分類名" w={72} className="h-[418px]">
        <div className="pt-[3px]"><RadioList items={industries} selected="電気･ガス･熱供給･水…" /></div>
      </RightCard>
      <RightCard title="年(集計年)" w={59} className="h-[114px]">
        <div className="pt-[3px]"><RadioList items={years} selected="2014" /></div>
      </RightCard>
      <RightCard title="合計(企業単位_従業者···" w={133} className="h-[71px]">
        <div className="mx-[4px] mt-[4px] h-[16px] border border-[#a9a48f] bg-[linear-gradient(90deg,#bfe6dc_0%,#9ad3d0_20%,#4fa7bf_52%,#3f92b0_68%,#3a6a98_88%,#365c88_100%)]" />
        <div className="flex justify-between px-[5px] font-['Noto_Sans',sans-serif] text-[12px] leading-[20px] text-[#444]">
          <T w={6}>2</T><T w={39}>58,770</T>
        </div>
      </RightCard>
    </div>
  );
}

/* ---------- bottom ---------- */
function SheetTabs() {
  const tab = "flex h-full shrink-0 items-center border-r border-[#c8c8c8]";
  return (
    <div className="flex h-[30px] border-t border-[#c8c8c8] bg-[#e5e5e5] text-[12px] leading-[20px] text-[#555]">
      <div className={`${tab} w-[131px] pl-[10px]`}>
        <Svg w={8} h={12}><path d="M.600 2v8c0 2 6.800 2 6.800 0V2C7.400 0 .600 0 .600 2c0 1.500 6.800 1.500 6.800 0" strokeWidth="1.100" /></Svg>
        <T w={60} className="ml-[6px]">データ ソース</T>
      </div>
      <div className={`${tab} w-[42px] bg-[#fafafa] pl-[6px]`}><T w={25}>MAP</T></div>
      <div className={`${tab} w-[58px] pl-[5px]`}><T w={41}>GRAPH</T></div>
      <div className={`${tab} w-[109px] pl-[7px]`}>
        <Svg w={11} h={11}><rect x=".600" y=".600" width="9.800" height="9.800" strokeWidth="1.200" /><path d="M5.500 0v11M0 5.500h11" strokeWidth="1.200" /></Svg>
        <T w={73} className="ml-[5px]">ダッシュボード 1</T>
      </div>
      <div className={`${tab} w-[32px] justify-center pl-px`}>
        <Svg w={16} h={15}><path d="M7 10.500H.600V.600h10.800V6" strokeWidth="1.200" /><path d="M3.500 8.500V6M6 8.500V4M8.500 7V3" /><path d="M7.500 11h8M11.500 7v8" strokeWidth="2" /></Svg>
      </div>
      <div className={`${tab} w-[32px] justify-center pl-px`}>
        <Svg w={16} h={15}><path d="M7 10.500H.600V.600h10.800V6M6 0v10.500M0 5.500h11" strokeWidth="1.200" /><path d="M7.500 11h8M11.500 7v8" strokeWidth="2" /></Svg>
      </div>
      <div className={`${tab} w-[32px] justify-center pl-px`}>
        <Svg w={16} h={15}><path d="M6 11.500L.600 10V.600L6 3l5.400-2.400V6M6 3v9" strokeWidth="1.200" /><path d="M7.500 11h8M11.500 7v8" strokeWidth="2" /></Svg>
      </div>
    </div>
  );
}
function StatusBar() {
  const cell = "flex h-full shrink-0 items-center border-l border-[#c8c8c8]";
  return (
    <div className="flex h-[21px] items-center border-t border-[#d0d0d0] bg-[#ebebeb] pt-px text-[12px] leading-[20px] text-black">
      <T w={62} className="ml-[3px]">47 個のマーク</T>
      <T w={57} className="ml-[26px]">1 行 x 1 列</T>
      <T w={213} className="ml-[26px]">合計(企業単位_従業者数（人）): 200,464</T>
      <div className="ml-auto flex h-full">
        <div className={`${cell} w-[127px] pl-[6px]`}>
          <Svg w={11} h={14} className="-mt-[3px] text-[#666]"><circle cx="5.500" cy="3.200" r="2.500" /><path d="M.600 13v-2.500c0-3.500 9.800-3.500 9.800 0V13z" strokeWidth="1.200" /></Svg>
          <T w={78} className="ml-[8px]">Shoichi Otomo</T>
          <Caret className="ml-[8px]" />
        </div>
        <div className={`${cell} w-[27px]`} />
        <div className={`${cell} w-[27px]`} />
        <div className={`${cell} w-[47px]`} />
        <div className={`${cell} -mt-px w-[71px] gap-[10px] pl-[8px] text-[#b8b8b8]`}>
          <Svg w={6} h={8}><path d="M.500 0v8" /><path d="M6 0v8L2 4z" fill="currentColor" stroke="none" /></Svg>
          <Svg w={5} h={8}><path d="M4.500 0v8L.500 4z" fill="currentColor" stroke="none" /></Svg>
          <Svg w={6} h={8} className="ml-px"><path d="M1 0v8l4-4z" fill="currentColor" stroke="none" /></Svg>
          <Svg w={6} h={8} className="ml-px"><path d="M5.500 0v8" /><path d="M0 0v8l4-4z" fill="currentColor" stroke="none" /></Svg>
        </div>
        <div className={`${cell} -mt-px w-[68px] gap-[10px] pl-[8px]`}>
          <Svg w={11} h={11}><path d="M0 1.500h11M0 5.500h11M0 9.500h11" stroke="#bbb" strokeWidth="3" strokeDasharray="3 1" /></Svg>
          <Svg w={11} h={11}><path d="M0 3.500h11" stroke="#bbb" strokeWidth="7" /><path d="M0 9.500h11" stroke="#bbb" strokeWidth="3" strokeDasharray="3 1" /></Svg>
          <div className="size-[11px] bg-[#666]" />
        </div>
      </div>
    </div>
  );
}

export default function App() {
  return (
    <div className="flex h-[1040px] w-[1920px] flex-col overflow-hidden bg-[#f5f5f5] font-['DejaVu_Sans','Noto_Sans_CJK_JP',sans-serif]">
      <TitleBar />
      <MenuBar />
      <Toolbar />
      <div className="flex h-[903px] shrink-0">
        <DataPane />
        <CardColumn />
        <div className="ml-[6px] flex w-[1538px] flex-col gap-[6px]">
          <Shelf
            icon={<Svg w={11} h={12} className="text-[#555]"><path d="M1.500 0v2M1.500 3v9M5.500 0v2M5.500 3v9M9.500 0v2M9.500 3v9" strokeWidth="2" /></Svg>}
            label="列" pill="経度 (生成)"
          />
          <Shelf
            icon={<Svg w={12} h={11} className="text-[#555]"><path d="M0 1.500h2M3 1.500h9M0 5.500h2M3 5.500h9M0 9.500h2M3 9.500h9" strokeWidth="2" /></Svg>}
            label="行" pill="緯度 (生成)"
          />
          <div className="flex gap-[6px]">
            <div className="h-[829px] w-[1378px] shrink-0 border border-[#d0d0d0] bg-white px-[5px]">
              <div className="flex h-[43px] items-center pt-[6px] pl-[5px] font-['Noto_Sans','Noto_Sans_CJK_JP',sans-serif] text-[20px] leading-[30px] text-[#333]">
                <T w={101}>産業別人口</T>
                <T w={6} className="font-light">(</T>
                <T w={99}>都道府県別</T>
                <T w={51} className="font-light">MAP)</T>
              </div>
              <div className="border border-[#e6e6e6]"><JapanMap /></div>
            </div>
            <RightColumn />
          </div>
        </div>
      </div>
      <SheetTabs />
      <StatusBar />
    </div>
  );
}
